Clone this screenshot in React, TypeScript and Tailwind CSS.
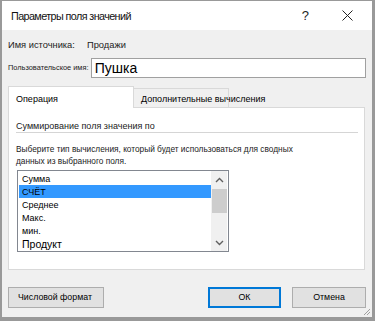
const items = ["Сумма", "СЧЁТ", "Среднее", "Макс.", "мин.", "Продукт"];

function Chevron({ up }: { up?: boolean }) {
  return (
    <svg width="9" height="6" viewBox="0 0 9 6" className="block">
      <path
        d={up ? "M1 5 L4.5 1.5 L8 5" : "M1 1 L4.5 4.5 L8 1"}
        fill="none"
        stroke="#606060"
        strokeWidth="1.4"
      />
    </svg>
  );
}

export default function App() {
  return (
    <div
      className="flex h-[321px] w-[375px] flex-col border-t border-r-[3px] border-b-4 border-l-2 border-[#999999] bg-[#f0f0f0] text-black"
      style={{ fontFamily: '"Liberation Sans", Arial, sans-serif' }}
    >
      {/* title bar */}
      <div className="flex h-[31px] items-center bg-white pl-[9px]">
        <span className="pt-px text-[10.8px] tracking-[-0.6px] text-[#111]">Параметры поля значений</span>
        <span className="ml-auto mr-[33px] text-[13px] text-[#222]">?</span>
        <svg width="11" height="11" viewBox="0 0 11 11" className="mr-[19px]">
          <path d="M0.5 0.5 L10.5 10.5 M10.5 0.5 L0.5 10.5" stroke="#222" strokeWidth="1" />
        </svg>
      </div>

      {/* body */}
      <div className="flex flex-1 flex-col px-[6px] pt-[9px]">
        <div className="flex h-[14px] items-center text-[9.3px] text-[#222]">
          <span className="w-[79px]">Имя источника:</span>
          <span>Продажи</span>
        </div>

        <div className="mt-[5px] flex h-[20px]">
          <span className="mt-[5px] w-[83px] text-[7.4px] leading-[9px] text-[#222]">Пользовательское имя:</span>
          <div className="flex h-[20px] w-[276px] items-center border border-[#a0a0a0] bg-white pl-[3px] text-[14px]">
            Пушка
          </div>
        </div>

        {/* tabs */}
        <div className="mt-[8px] flex items-end">
          <div className="relative z-10 -mb-px flex h-[22px] w-[126px] items-center border border-b-0 border-[#d9d9d9] bg-white pl-[7px] pt-[5px] text-[9px]">
            Операция
          </div>
          <div className="flex h-[19px] w-[95px] items-center whitespace-nowrap border border-b-0 border-l-0 border-[#d9d9d9] bg-[#f0f0f0] pl-[7px] pt-[3px] text-[9px]">
            Дополнительные вычисления
          </div>
        </div>

        <div className="flex h-[163px] w-[357px] flex-col border border-[#d9d9d9] bg-white px-[7px] pt-[13px]">
          <div className="text-[9px] leading-[10px] text-[#222]">Суммирование поля значения по</div>
          <div className="mt-px h-px w-[342px] bg-[#d5d5d5]" />
          <div className="mt-[10px] text-[8.3px] leading-[12px] text-[#222]">
            Выберите тип вычисления, который будет использоваться для сводных
            <br />
            данных из выбранного поля.
          </div>

          {/* listbox */}
          <div className="ml-px mt-[3px] flex h-[82px] w-[212px] border border-[#828790] bg-white">
            <div className="flex flex-1 flex-col pl-px pt-px">
              {items.map((it, i) => (
                <div
                  key={it}
                  className={
                    i === 1
                      ? "flex h-[13px] items-center bg-[#3399ff] pl-[3px] pt-[2px] text-[9px] text-black"
                      : i === 5
                        ? "flex h-[13px] items-center pl-[3px] pt-[3px] text-[10.5px] text-black"
                        : "flex h-[13px] items-center pl-[3px] pt-[3px] text-[9px] text-black"
                  }
                >
                  {it}
                </div>
              ))}
            </div>
            <div className="mr-px flex w-[16px] flex-col items-center bg-[#f0f0f0]">
              <div className="flex h-[17px] items-center pt-px">
                <Chevron up />
              </div>
              <div className="mt-px h-[24px] w-[15px] bg-[#cdcdcd]" />
              <div className="mt-auto flex h-[17px] items-center">
                <Chevron />
              </div>
            </div>
          </div>
        </div>

        {/* buttons */}
        <div className="mt-[17px] flex items-start">
          <div className="flex h-[21px] w-[96px] items-center border border-[#adadad] bg-[#e1e1e1] pl-[9px] text-[8.8px]">
            Числовой формат
          </div>
          <div className="ml-auto flex h-[21px] w-[73px] items-center justify-center border-2 border-[#0078d7] bg-[#e1e1e1] text-[8.8px]">
            ОК
          </div>
          <div className="ml-[11px] flex h-[21px] w-[74px] items-center justify-center border border-[#adadad] bg-[#e1e1e1] text-[8.8px]">
            Отмена
          </div>
        </div>

        <div className="mt-auto flex justify-end">
          <svg width="8" height="8" viewBox="0 0 8 8" className="-mr-[5px] mb-px">
            <path d="M7 1 L1 7 M7 4 L4 7" stroke="#a0a0a0" strokeWidth="1" />
          </svg>
        </div>
      </div>
    </div>
  );
}
